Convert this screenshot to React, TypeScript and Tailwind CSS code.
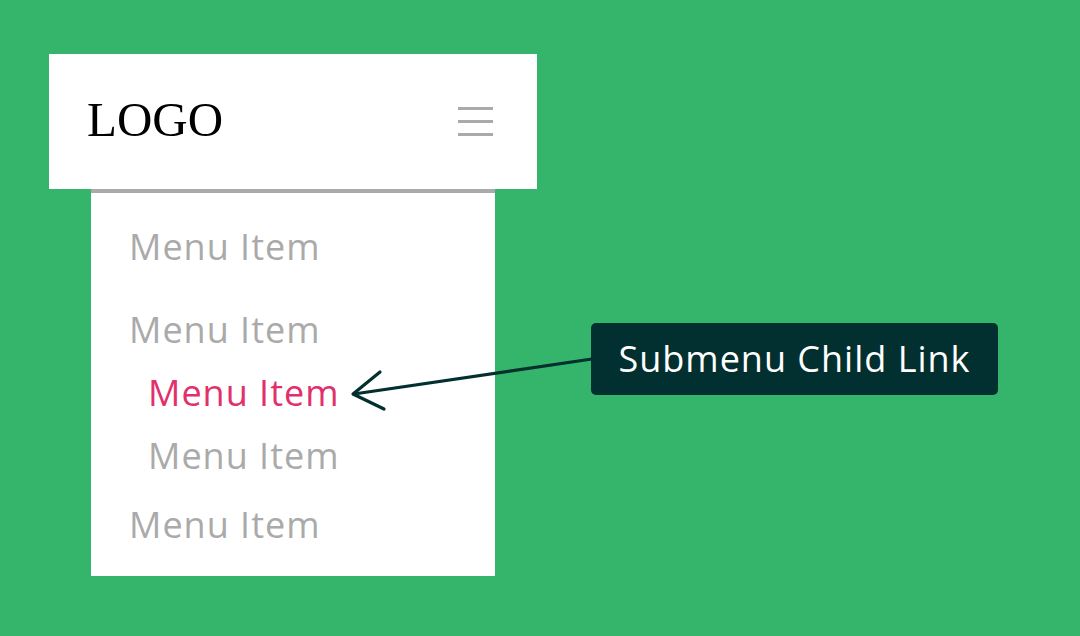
const items = [
  { label: "Menu Item", sub: false, active: false, cls: "pt-[36px]" },
  { label: "Menu Item", sub: false, active: false, cls: "pt-[47px]" },
  { label: "Menu Item", sub: true, active: true, cls: "pt-[27px]" },
  { label: "Menu Item", sub: true, active: false, cls: "pt-[27px]" },
  { label: "Menu Item", sub: false, active: false, cls: "pt-[33px]" },
];

const Hamburger = () => (
  <div className="flex flex-col gap-[10px] w-[35px]">
    <span className="block h-[3px] bg-[#aaaaaa]" />
    <span className="block h-[3px] bg-[#aaaaaa]" />
    <span className="block h-[3px] bg-[#aaaaaa]" />
  </div>
);

const App = () => {
  return (
    <div className="relative w-[1080px] h-[636px] bg-[#35b56b] overflow-hidden font-['Open_Sans',sans-serif]">
      <div className="pl-[49px] pt-[54px] w-fit">
        <header className="w-[488px] h-[135px] bg-white flex items-center justify-between pl-[38px] pr-[44px]">
          <h1 className="font-['Liberation_Serif',serif] text-[49px] leading-none text-black mb-[4px]">
            LOGO
          </h1>
          <Hamburger />
        </header>
        <nav className="ml-[42px] w-[404px] h-[387px] bg-white border-t-[4px] border-[#aaaaaa]">
          <ul className="pl-[38px]">
            {items.map((item, i) => (
              <li
                key={i}
                className={`${item.cls} ${item.sub ? "pl-[19px]" : ""} ${
                  item.active ? "text-[#e1306c]" : "text-[#aaaaaa]"
                } text-[36px] leading-[36px] tracking-[1px]`}
              >
                {item.label}
              </li>
            ))}
          </ul>
        </nav>
      </div>

      {/* annotation arrow */}
      <svg
        className="absolute left-0 top-0"
        width="1080"
        height="636"
        viewBox="0 0 1080 636"
        fill="none"
      >
        <path
          d="M592 359 L354 394"
          stroke="#02302f"
          strokeWidth="3.2"
          strokeLinecap="round"
        />
        <path
          d="M380 372 L353 394 L384 409"
          stroke="#02302f"
          strokeWidth="3.2"
          strokeLinecap="round"
          strokeLinejoin="round"
        />
      </svg>

      <div className="absolute left-[591px] top-[323px] w-[407px] h-[72px] rounded-[5px] bg-[#022f2f] flex items-center justify-center">
        <span className="text-white text-[36px] leading-none tracking-[1px]">
          Submenu Child Link
        </span>
      </div>
    </div>
  );
};

export default App;
